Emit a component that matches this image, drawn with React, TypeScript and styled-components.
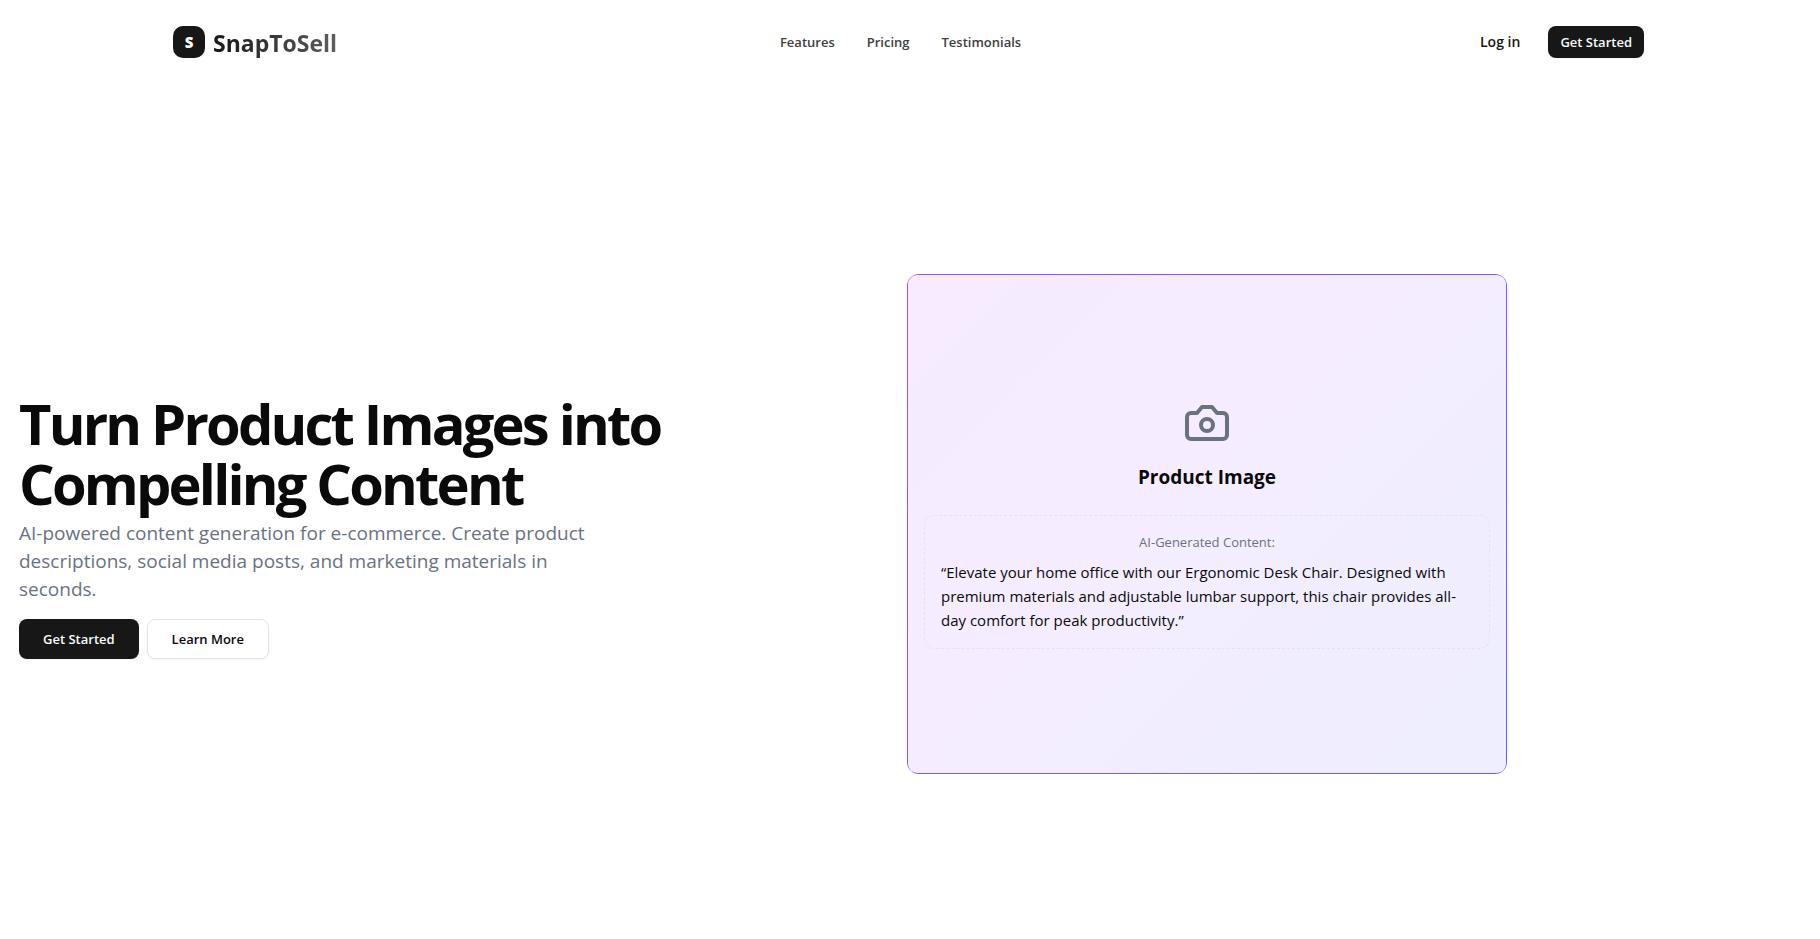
import React from "react";
import styled, { createGlobalStyle, css } from "styled-components";

const GlobalStyle = createGlobalStyle`
  *, *::before, *::after { box-sizing: border-box; }
  body {
    margin: 0;
    background: #fff;
    color: #0a0a0a;
    font-family: "Segoe UI", "Open Sans", "Noto Sans", sans-serif;
    font-size: 15px;
    line-height: 24px;
  }
  h1, h2, p { margin: 0; }
  a { color: inherit; text-decoration: none; }
`;

const Header = styled.header`
  display: flex;
  align-items: center;
  justify-content: space-between;
  max-width: 1474px;
  height: 84px;
  margin: 0 auto;
  padding-right: 3px;
`;

const Brand = styled.a`
  display: flex;
  align-items: center;
  gap: 8px;
`;

const BrandMark = styled.span`
  display: grid;
  place-items: center;
  width: 32px;
  height: 32px;
  border-radius: 10px;
  background: #171717;
  color: #fafafa;
  font-size: 15px;
  font-weight: 800;
`;

const BrandName = styled.span`
  padding-top: 2px;
  font-size: 23px;
  line-height: 32px;
  font-weight: 700;
  background: linear-gradient(to right, #171717, #5e5e5e);
  background-clip: text;
  color: transparent;
`;

const Nav = styled.nav`
  display: flex;
  gap: 32px;
`;

const NavLink = styled.a`
  font-size: 13px;
  line-height: 20px;
  font-weight: 600;
  color: #404040;
`;

const Actions = styled.div`
  display: flex;
  align-items: center;
  gap: 12px;
`;

const LoginLink = styled(NavLink)`
  padding: 0 16px;
  color: #171717;
  font-size: 14px;
`;

const Button = styled.button<{ $size: "small" | "large"; $outline?: boolean }>`
  border: 0;
  border-radius: 8px;
  background: #171717;
  color: #fafafa;
  font-family: inherit;
  font-size: 13px;
  line-height: 20px;
  font-weight: 600;
  white-space: nowrap;
  box-shadow: 0 1px 2px rgba(0, 0, 0, 0.05);
  ${(p) =>
    p.$size === "small"
      ? css`height: 32px; padding: 0 12px;`
      : css`height: 40px; padding: 0 24px;`}
  ${(p) =>
    p.$outline &&
    css`
      border: 1px solid #e5e5e5;
      background: #fff;
      color: #0a0a0a;
    `}
`;

const Hero = styled.main`
  display: grid;
  grid-template-columns: 1fr 600px;
  align-items: center;
  gap: 48px;
  max-width: 1526px;
  padding: 190px 19px;
`;

const Intro = styled.section`
  display: flex;
  flex-direction: column;
  gap: 6px;
  padding-top: 4px;
`;

const Title = styled.h1`
  max-width: 720px;
  font-size: 56px;
  line-height: 60px;
  font-weight: 700;
  letter-spacing: -0.05em;
`;

const Lead = styled.p`
  max-width: 600px;
  color: #6a7282;
  font-size: 19px;
  line-height: 28px;
`;

const ButtonRow = styled.div`
  display: flex;
  gap: 8px;
  margin-top: 10px;
`;

const PreviewFrame = styled.section`
  overflow: hidden;
  padding: 1px;
  border-radius: 12px;
  background: linear-gradient(135deg, #ad46ff, #615fff);
`;

const Preview = styled.div`
  display: flex;
  flex-direction: column;
  align-items: center;
  justify-content: center;
  min-height: 498px;
  padding: 16px;
  border-radius: 9px;
  background: linear-gradient(135deg, #f9ebff, #f5ebff 12%, #f5edff 45%, #f1edff 65%, #eeeeff);
`;

const CameraIcon = styled.svg`
  width: 48px;
  height: 48px;
  color: #6a7282;
`;

const PreviewTitle = styled.h2`
  margin: 16px 0 24px;
  font-size: 19px;
  line-height: 28px;
  font-weight: 700;
`;

const Generated = styled.div`
  width: 100%;
  padding: 16px;
  border: 1px dashed #e5e5e5;
  border-radius: 10px;
`;

const GeneratedLabel = styled.p`
  margin-bottom: 8px;
  color: #6a7282;
  font-size: 13px;
  line-height: 20px;
  text-align: center;
`;

const GeneratedText = styled.p`
  font-size: 15px;
  line-height: 24px;
`;

export default function App() {
  return (
    <>
      <GlobalStyle />
      <Header>
        <Brand href="#">
          <BrandMark>S</BrandMark>
          <BrandName>SnapToSell</BrandName>
        </Brand>
        <Nav>
          <NavLink href="#features">Features</NavLink>
          <NavLink href="#pricing">Pricing</NavLink>
          <NavLink href="#testimonials">Testimonials</NavLink>
        </Nav>
        <Actions>
          <LoginLink href="#login">Log in</LoginLink>
          <Button type="button" $size="small">Get Started</Button>
        </Actions>
      </Header>
      <Hero>
        <Intro>
          <Title>Turn Product Images into Compelling Content</Title>
          <Lead>
            AI-powered content generation for e-commerce. Create product descriptions, social media
            posts, and marketing materials in seconds.
          </Lead>
          <ButtonRow>
            <Button type="button" $size="large">Get Started</Button>
            <Button type="button" $size="large" $outline>Learn More</Button>
          </ButtonRow>
        </Intro>
        <PreviewFrame>
          <Preview>
            <CameraIcon
              viewBox="0 0 24 24"
              fill="none"
              stroke="currentColor"
              strokeWidth="2"
              strokeLinecap="round"
              strokeLinejoin="round"
              aria-hidden="true"
            >
              <path d="M14.5 4h-5L7 7H4a2 2 0 0 0-2 2v9a2 2 0 0 0 2 2h16a2 2 0 0 0 2-2V9a2 2 0 0 0-2-2h-3l-2.5-3z" />
              <circle cx="12" cy="13" r="3" />
            </CameraIcon>
            <PreviewTitle>Product Image</PreviewTitle>
            <Generated>
              <GeneratedLabel>AI-Generated Content:</GeneratedLabel>
              <GeneratedText>
                “Elevate your home office with our Ergonomic Desk Chair. Designed with premium
                materials and adjustable lumbar support, this chair provides all-day comfort for
                peak productivity.”
              </GeneratedText>
            </Generated>
          </Preview>
        </PreviewFrame>
      </Hero>
    </>
  );
}
